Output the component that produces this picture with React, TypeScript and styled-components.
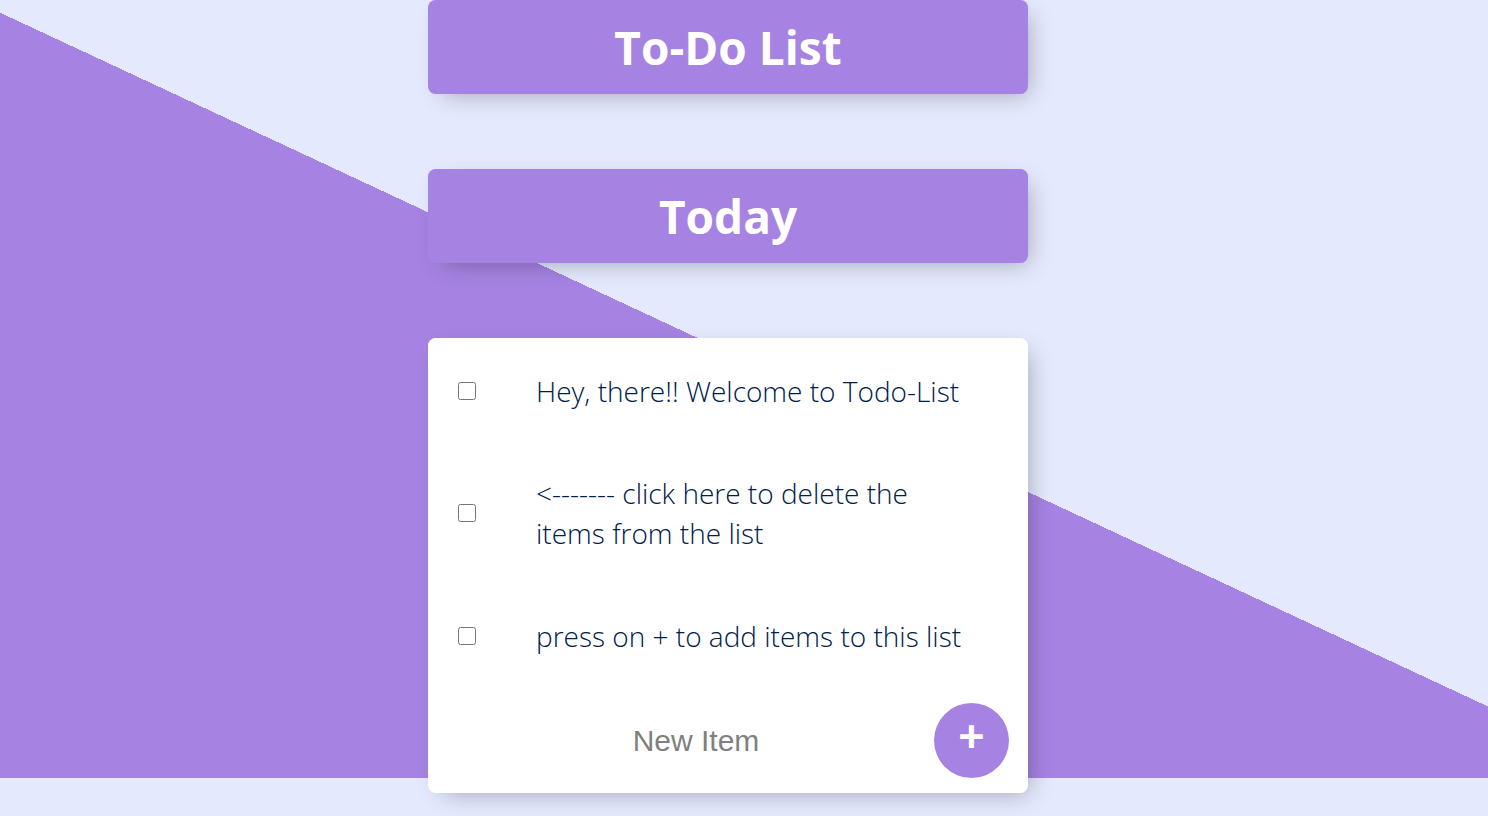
import * as React from 'react';
import styled, { createGlobalStyle } from 'styled-components';

const GlobalStyle = createGlobalStyle`
  html, body {
    margin: 0;
    padding: 0;
    background: #e4e9fd;
  }
  body {
    font-family: 'Open Sans', 'Liberation Sans', sans-serif;
  }
`;

// the diagonal split only covers the first 778px of the page
const Page = styled.div`
  padding: 0 32px 23px 0;
  background-image: linear-gradient(25deg, #a683e3 52%, #e4e9fd 52%);
  background-size: 100% 778px;
  background-repeat: no-repeat;
`;

const Box = styled.div<{ $heading?: boolean }>`
  width: 600px;
  margin: 0 auto 75px;
  background: ${(props) => (props.$heading ? '#a683e3' : 'white')};
  border-radius: 7.5px;
  box-shadow: 7.5px 7.5px 22.5px -7.5px rgba(0, 0, 0, 0.3);
  text-align: center;

  &:last-child {
    margin-bottom: 0;
  }
`;

const Title = styled.h1`
  margin: 0;
  padding: 15px;
  color: white;
  font-family: 'Open Sans', sans-serif;
  font-weight: 700;
  font-size: 46px;
  line-height: 64px;
`;

const Item = styled.div`
  display: flex;
  align-items: center;
  min-height: 105px;
  text-align: left;
`;

const Check = styled.input`
  width: 18px;
  height: 18px;
  margin: 0 30px;
  flex: none;
`;

const ItemText = styled.p`
  margin: 0;
  padding: 30px 45px 30px 30px;
  font-family: 'Open Sans', sans-serif;
  font-size: 28px;
  line-height: 40px;
  font-weight: 300;
  color: #00204a;
`;

const Form = styled.form`
  display: flex;
  align-items: center;
  height: 105px;
  padding-left: 33px;
  gap: 3px;
`;

const NewInput = styled.input`
  width: 470px;
  height: 60px;
  border: none;
  background: transparent;
  text-align: center;
  font-family: 'Liberation Sans', Arial, sans-serif;
  font-size: 30px;
  padding: 0;
  outline: none;

  &::placeholder {
    color: grey;
    opacity: 1;
  }
`;

const AddButton = styled.button`
  width: 75px;
  height: 75px;
  border-radius: 50%;
  border: none;
  background: #a683e3;
  color: white;
  font-family: 'Liberation Sans', Arial, sans-serif;
  font-size: 45px;
  font-weight: 700;
  line-height: 1;
  padding: 0 0 9px;
  flex: none;
`;

const items = [
  'Hey, there!! Welcome to Todo-List',
  '<------- click here to delete the items from the list',
  'press on + to add items to this list',
];

export default function App() {
  return (
    <>
      <GlobalStyle />
      <Page>
        <Box $heading>
          <Title>To-Do List</Title>
        </Box>
        <Box $heading>
          <Title>Today</Title>
        </Box>
        <Box>
          {items.map((text) => (
            <Item key={text}>
              <Check type="checkbox" />
              <ItemText>{text}</ItemText>
            </Item>
          ))}
          <Form onSubmit={(e) => e.preventDefault()}>
            <NewInput type="text" placeholder="New Item" />
            <AddButton type="submit">+</AddButton>
          </Form>
        </Box>
      </Page>
    </>
  );
}
